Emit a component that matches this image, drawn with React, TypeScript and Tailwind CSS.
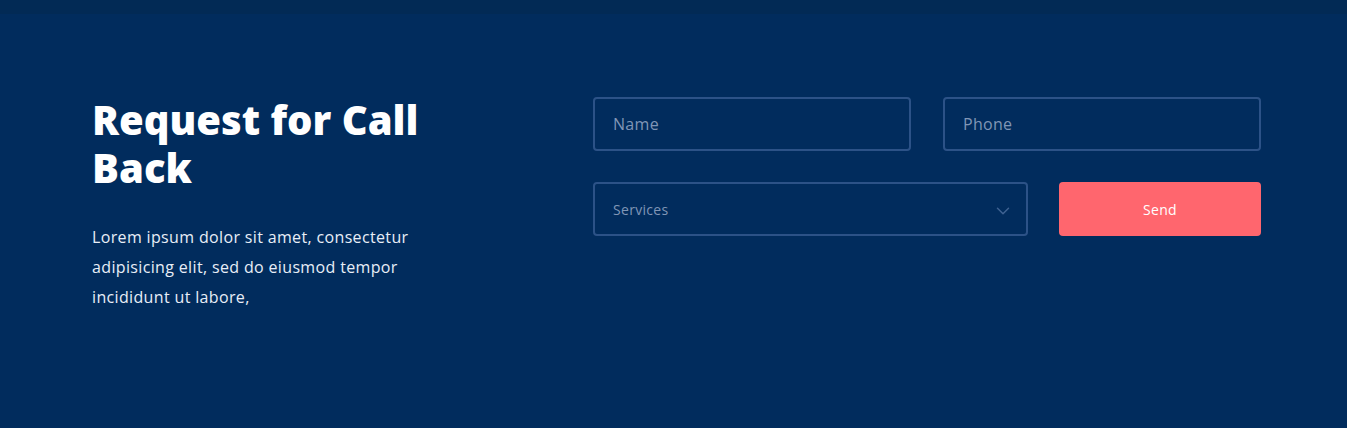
import { ChevronDown } from "lucide-react"

export default function App() {
  return (
    <main className="min-h-[428px] w-full bg-[#012c5d] font-['Open_Sans',sans-serif]">
      {/* strip from the section above */}
      <div className="h-[14px] bg-[#022a55]"></div>

      <section className="flex items-start pl-[92px] pr-[86px] pt-[80px]">
        <div className="w-[360px] pt-[2px]">
          <h2 className="text-[40px] font-extrabold leading-[48px] tracking-[0px] text-white">
            Request for Call Back
          </h2>
          <p className="mt-[30px] text-[16px] leading-[30px] tracking-[0.35px] text-[#e8eef7]">
            Lorem ipsum dolor sit amet, consectetur adipisicing elit, sed do eiusmod tempor incididunt ut labore,
          </p>
        </div>

        <form className="ml-auto flex w-[668px] flex-col gap-[31px] pt-[3px]" onSubmit={(e) => e.preventDefault()}>
          <div className="grid grid-cols-2 gap-[32px]">
            <input
              type="text"
              placeholder="Name"
              className="h-[54px] rounded-[4px] border-2 border-[#2c5287] bg-transparent px-[18px] text-[16px] tracking-[0.3px] text-white placeholder:text-[#8096b6] outline-none"
            />
            <input
              type="text"
              placeholder="Phone"
              className="h-[54px] rounded-[4px] border-2 border-[#2c5287] bg-transparent px-[18px] text-[16px] tracking-[0.3px] text-white placeholder:text-[#8096b6] outline-none"
            />
          </div>
          <div className="flex gap-[31px]">
            <div className="relative w-[435px]">
              <select className="h-[54px] w-full appearance-none rounded-[4px] border-2 border-[#2c5287] bg-transparent px-[18px] text-[14px] tracking-[0.3px] text-[#8096b6] outline-none">
                <option>Services</option>
              </select>
              <ChevronDown className="pointer-events-none absolute right-[14px] top-[18px] h-[22px] w-[22px] text-[#3f6292]" strokeWidth={1.6} />
            </div>
            <button type="submit" className="h-[54px] w-[202px] rounded-[4px] bg-[#ff666e] text-[14px] tracking-[0.3px] text-white">
              Send
            </button>
          </div>
        </form>
      </section>
    </main>
  )
}
